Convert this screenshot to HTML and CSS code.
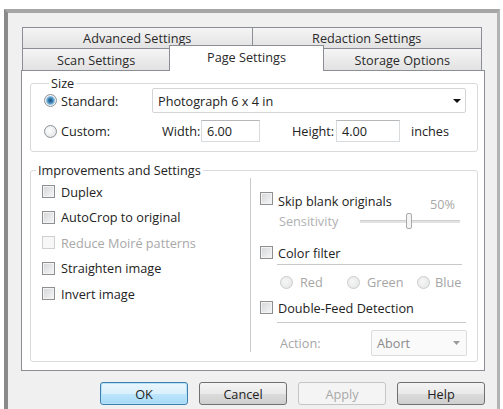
FILE: index.html
```html
<!DOCTYPE html>
<html>
<head>
<meta charset="utf-8">
<link rel="stylesheet" href="styles.css">
</head>
<body>
<div class="window">
  <div class="tabs">
    <div class="tab-row row1">
      <div class="tab">Advanced Settings</div>
      <div class="tab">Redaction Settings</div>
    </div>
    <div class="tab-row row2">
      <div class="tab t-scan">Scan Settings</div>
      <div class="tab t-page selected">Page Settings</div>
      <div class="tab t-store">Storage Options</div>
    </div>
  </div>
  <div class="panel">
    <fieldset class="group size-group">
      <legend>Size</legend>
      <div class="size-row1">
        <label class="opt"><span class="radio checked"></span><span>Standard:</span></label>
        <div class="combo wide"><span>Photograph 6 x 4 in</span><svg class="arrow" width="8" height="4" viewBox="0 0 8 4"><path d="M0 0H8L4 4Z" fill="#111"/></svg></div>
      </div>
      <div class="size-row2">
        <label class="opt opt2"><span class="radio"></span><span>Custom:</span></label>
        <span class="lbl-w">Width:</span>
        <div class="field f-w">6.00</div>
        <span class="lbl-h">Height:</span>
        <div class="field f-h">4.00</div>
        <span class="unit">inches</span>
      </div>
    </fieldset>

    <fieldset class="group imp-group">
      <legend>Improvements and Settings</legend>
      <div class="cols">
        <div class="col-left">
          <div class="chk-row"><span class="check"></span><span>Duplex</span></div>
          <div class="chk-row"><span class="check"></span><span>AutoCrop to original</span></div>
          <div class="chk-row disabled"><span class="check"></span><span>Reduce Moiré patterns</span></div>
          <div class="chk-row"><span class="check"></span><span>Straighten image</span></div>
          <div class="chk-row"><span class="check"></span><span>Invert image</span></div>
        </div>
        <div class="col-right">
          <div class="r-row skip"><span class="check"></span><span>Skip blank originals</span><span class="pct">50%</span></div>
          <div class="sens">
            <span class="sens-lbl">Sensitivity</span>
            <div class="slider"><div class="track"></div><div class="thumb"></div></div>
          </div>
          <div class="r-row cf"><span class="check"></span><span>Color filter</span></div>
          <div class="rule rule1"></div>
          <div class="rgb">
            <span class="rgb-item i-red"><span class="radio dis"></span><span>Red</span></span>
            <span class="rgb-item i-green"><span class="radio dis"></span><span>Green</span></span>
            <span class="rgb-item i-blue"><span class="radio dis"></span><span>Blue</span></span>
          </div>
          <div class="r-row df"><span class="check"></span><span>Double-Feed Detection</span></div>
          <div class="rule rule2"></div>
          <div class="action">
            <span class="action-lbl">Action:</span>
            <div class="combo small"><span>Abort</span><svg class="arrow" width="7" height="4" viewBox="0 0 7 4"><path d="M0 0H7L3.5 4Z" fill="#9a9a9a"/></svg></div>
          </div>
        </div>
      </div>
    </fieldset>
  </div>
  <div class="buttons">
    <div class="btn default">OK</div>
    <div class="btn">Cancel</div>
    <div class="btn disabled">Apply</div>
    <div class="btn">Help</div>
  </div>
</div>
</body>
</html>
```
FILE: styles.css
```css
html, body {
  margin: 0;
  padding: 0;
  background: #ffffff;
}
body {
  font-family: "Open Sans", "Noto Sans", sans-serif;
  font-size: 12.7px;
  color: #222;
  overflow: hidden;
  height: 409px;
}
.window {
  margin: 9px 3px 0 4px;
  height: 382px;
  border-left: 4px solid #8a8a8a;
  border-top: 4px solid #a6a6a6;
  border-right: 3px solid #b3b3b3;
  background: #f0f0f0;
  padding: 14px 12px 0 13px;
}
.tabs {
  margin: 0 3px 0 1px;
}
.tab-row {
  display: flex;
}
.row1 {
  height: 21px;
}
.row2 {
  height: 22px;
  align-items: flex-end;
}
.tab {
  box-sizing: border-box;
  border: 1px solid #8b8e94;
  border-bottom: 0;
  margin-left: -1px;
  background: linear-gradient(#f5f5f5, #e2e2e2);
  display: flex;
  align-items: center;
  justify-content: center;
  color: #2a2a2a;
}
.tab:first-child {
  margin-left: 0;
}
.row1 .tab {
  flex: 1;
  height: 21px;
}
.row2 .tab {
  height: 22px;
}
.t-scan { width: 149px; }
.t-page { width: 155px; }
.t-store { width: 160px; }
.tab.selected {
  height: 26px;
  margin-bottom: -1px;
  background: #ffffff;
  position: relative;
  z-index: 1;
  padding-bottom: 4px;
}
.panel {
  box-sizing: border-box;
  height: 301px;
  background: #ffffff;
  border: 1px solid #8b8e94;
  padding: 6px 6px 0 8px;
}
.group {
  margin: 0;
  padding: 0;
  border: 1px solid #d8dbde;
  border-radius: 3px;
  min-width: 0;
}
.group legend {
  margin-left: 5px;
  padding: 0 2px;
  line-height: 12px;
  color: #222;
}
.size-group {
  padding: 0 11px 9px 13px;
}
.size-row1 {
  display: flex;
  align-items: center;
  height: 25px;
  margin-top: -1px;
}
.opt {
  display: flex;
  align-items: center;
  gap: 4px;
  width: 108px;
  flex: none;
}
.opt2 {
  width: 118px;
}
.radio {
  box-sizing: border-box;
  width: 13px;
  height: 13px;
  border-radius: 50%;
  border: 1px solid #8e9296;
  background: radial-gradient(circle at 40% 40%, #ffffff, #dadde0);
  flex: none;
}
.radio.checked {
  background: radial-gradient(circle, #1f4f7a 0, #3f86b8 2.5px, #8fc1e2 4px, #eef2f5 5px);
}
.radio.dis {
  border-color: #c9cbcd;
  background: radial-gradient(circle at 40% 40%, #f6f6f6, #e3e4e5);
}
.combo {
  box-sizing: border-box;
  display: flex;
  align-items: center;
  justify-content: space-between;
  background: #ffffff;
  border: 1px solid #d2d4d6;
  border-radius: 2px;
}
.combo.wide {
  width: 314px;
  height: 25px;
  padding: 0 4px 0 5px;
  color: #222;
}
.size-row2 {
  display: flex;
  align-items: center;
  height: 22px;
  margin-top: 7px;
}
.lbl-w {
  width: 39px;
  flex: none;
}
.field {
  box-sizing: border-box;
  height: 22px;
  border: 1px solid #d9dcdf;
  border-top-color: #b5b8bb;
  display: flex;
  align-items: center;
  padding-left: 5px;
  flex: none;
}
.f-w {
  width: 59px;
  margin-right: 32px;
}
.lbl-h {
  width: 44px;
  flex: none;
}
.f-h {
  width: 64px;
  margin-right: 11px;
}
.imp-group {
  margin-top: 12px;
}
.cols {
  display: flex;
  height: 185px;
}
.col-left {
  width: 219px;
  padding: 3px 0 0 11px;
  box-sizing: border-box;
  flex: none;
}
.chk-row {
  display: flex;
  align-items: center;
  gap: 6px;
  height: 25.5px;
}
.check {
  box-sizing: border-box;
  width: 13px;
  height: 13px;
  border: 1px solid #8e8f90;
  background: linear-gradient(135deg, #d3d5d7, #f6f7f8);
  box-shadow: inset 0 0 0 1px #f3f3f3;
  flex: none;
}
.disabled {
  color: #a8a8a8;
}
.chk-row.disabled .check {
  border-color: #cfd0d1;
  background: #f7f7f7;
  box-shadow: none;
}
.col-right {
  flex: 1;
  margin: 2px 0 9px;
  border-left: 1px solid #cacaca;
  padding: 12px 0 0 9px;
}
.r-row {
  display: flex;
  align-items: center;
  gap: 5px;
  height: 17px;
}
.skip {
  align-items: flex-start;
}
.skip > span:nth-child(2),
.skip > .check {
  margin-top: 2px;
}
.pct {
  margin-left: auto;
  margin-right: 22px;
  margin-top: 7px;
  line-height: 14px;
  color: #a8a8a8;
}
.sens {
  display: flex;
  align-items: center;
  height: 18px;
  margin-top: 5px;
  padding-left: 19px;
}
.sens-lbl {
  width: 81px;
  color: #b0b0b0;
  flex: none;
}
.slider {
  width: 100px;
  height: 18px;
  display: flex;
  align-items: center;
  position: relative;
}
.track {
  width: 100%;
  height: 2px;
  background: #e2e2e2;
  border-top: 1px solid #cfcfcf;
}
.thumb {
  position: absolute;
  left: 46px;
  top: 1px;
  width: 6px;
  height: 16px;
  box-sizing: border-box;
  border: 1px solid #a9a9a9;
  border-radius: 2px;
  background: #f4f4f4;
}
.cf {
  margin-top: 14px;
}
.rule {
  height: 1px;
  background: #c8c8c8;
  margin-left: 17px;
}
.rule1 {
  margin-top: 3px;
  width: 185px;
}
.rgb {
  display: flex;
  align-items: center;
  height: 16px;
  margin-top: 9px;
  padding-left: 20px;
  color: #a6a6a6;
}
.rgb-item {
  display: flex;
  align-items: center;
  gap: 7px;
  flex: none;
}
.i-red { width: 67px; }
.i-green { width: 70px; }
.i-blue { gap: 5px; }
.df {
  margin-top: 9px;
}
.rule2 {
  margin-top: 6px;
  width: 189px;
}
.action {
  display: flex;
  align-items: center;
  height: 26px;
  margin-top: 7px;
  padding-left: 20px;
}
.action-lbl {
  width: 91px;
  color: #a6a6a6;
  flex: none;
}
.combo.small {
  width: 96px;
  height: 26px;
  padding: 0 6px 0 5px;
  color: #8a8a8a;
  border-color: #dadcde;
  background: #fafafa;
}
.buttons {
  display: flex;
  justify-content: flex-end;
  gap: 11px;
  margin-top: 11px;
}
.btn {
  box-sizing: border-box;
  width: 88px;
  height: 23px;
  border: 1px solid #707070;
  border-radius: 3px;
  background: linear-gradient(#f4f4f4, #e9e9e9 50%, #dcdcdc 51%, #cfcfcf);
  display: flex;
  align-items: center;
  justify-content: center;
  color: #222;
}
.btn.default {
  border-color: #3c7fb1;
  background: linear-gradient(#eaf6fd, #d9f0fc 50%, #bee6fd 51%, #a7d9f5);
  box-shadow: inset 0 0 0 1px #b9e2f8;
}
.btn.disabled {
  border-color: #c3c5c7;
  background: #f4f4f4;
  color: #a8a8a8;
}
```
